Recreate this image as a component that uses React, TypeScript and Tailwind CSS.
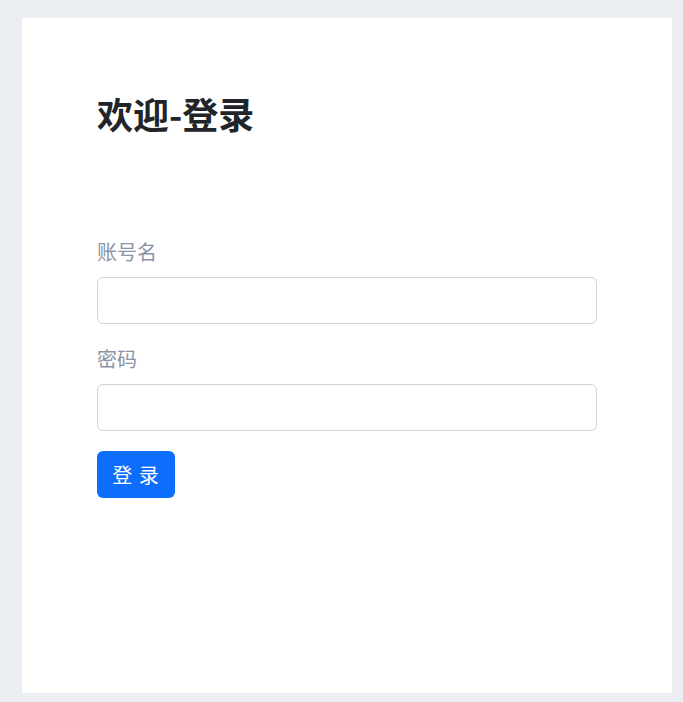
export default function App() {
	return (
		<div className="min-h-[702px] bg-[#ebeef3] pt-[18px] pl-[22px] pb-[10px]" style={{ fontFamily: '"Noto Sans CJK SC", "Noto Sans", sans-serif' }}>
			<div className="h-[675px] w-[650px] bg-white px-[75px] pt-[74px]">
				<h1 className="text-[36px] leading-[43px] font-bold text-[#212529]">欢迎-登录</h1>
				<form className="mt-[102px] flex w-[500px] flex-col" onSubmit={(e) => e.preventDefault()}>
					<label className="text-[20px] leading-[30px] text-[#8a94a6]">账号名</label>
					<input type="text" className="mt-[10px] h-[47px] w-full rounded-[6px] border border-[#ced4da] px-3 text-[20px] outline-none" />
					<label className="mt-[20px] text-[20px] leading-[30px] text-[#8a94a6]">密码</label>
					<input type="password" className="mt-[10px] h-[47px] w-full rounded-[6px] border border-[#ced4da] px-3 text-[20px] outline-none" />
					<div className="mt-[20px]">
						<button type="submit" className="h-[47px] w-[78px] rounded-[6px] bg-[#0d6efd] text-[20px] tracking-[1px] text-white">
							登 录
						</button>
					</div>
				</form>
			</div>
		</div>
	);
}
